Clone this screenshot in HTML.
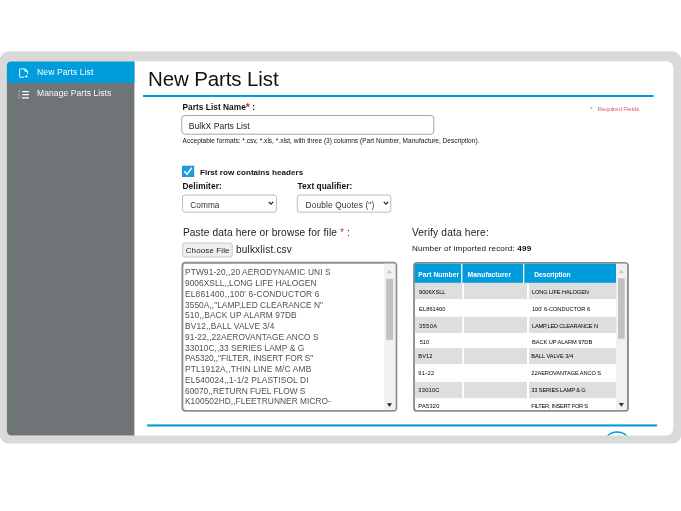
<!DOCTYPE html>
<html lang="en"><head><meta charset="utf-8"><title>New Parts List</title>
<style>
html,body{margin:0;padding:0;background:#fff;}
body{width:681px;height:511px;position:relative;overflow:hidden;font-family:"Liberation Sans",Arial,sans-serif;}
.t{position:absolute;white-space:nowrap;margin:0;padding:0;}
.ast{color:#cc1f2a;font-size:1.25em;line-height:0;vertical-align:-0.12em;letter-spacing:0;}
#txt{position:absolute;left:0;top:0;width:681px;height:511px;will-change:transform;}
svg.bg{position:absolute;left:0;top:0;}
</style></head><body>
<svg class="bg" width="681" height="511" viewBox="0 0 681 511">
<rect x="-0.2" y="51.3" width="681.40" height="392.30" rx="9" fill="#d9d9d9"/>
<defs><clipPath id="pc"><path d="M11.4 61.2H666.3a7 7 0 0 1 7 7V428.6a7 7 0 0 1-7 7H11.4a4.5 4.5 0 0 1-4.5-4.5V65.7a4.5 4.5 0 0 1 4.5-4.5z"/></clipPath></defs>
<path d="M11.4 61.2H666.3a7 7 0 0 1 7 7V428.6a7 7 0 0 1-7 7H11.4a4.5 4.5 0 0 1-4.5-4.5V65.7a4.5 4.5 0 0 1 4.5-4.5z" fill="#fff"/>
<g clip-path="url(#pc)">
<rect x="0" y="61.5" width="134.40" height="378.50" fill="#6f7477"/>
<rect x="0" y="61.5" width="134.40" height="21.40" fill="#009ddc"/>
<circle cx="617.1" cy="445.6" r="13.6" fill="none" stroke="#009ddc" stroke-width="1.4"/>
</g>
<g fill="none" stroke="#fff" stroke-width="0.95" stroke-linejoin="round" stroke-linecap="round">
<path d="M23.8 77.2H20.2a.6 .6 0 0 1-.6-.6V69.5a.6 .6 0 0 1 .6-.6H24.9L27.6 71.6V73.7"/>
<path d="M24.9 68.9V71.6H27.6z" fill="#fff" stroke-width="0.5"/>
<path d="M26.3 74.6c.2 1.2 .6 1.6 1.8 1.8c-1.2.2-1.6.6-1.8 1.8c-.2-1.2-.6-1.6-1.8-1.8c1.2-.2 1.6-.6 1.8-1.8z" fill="#fff" stroke="none"/>
</g>
<g fill="none" stroke="#fff">
<path d="M22.1 91.6h6.8M22.1 94.7h6.8M22.1 97.8h6.8" stroke-width="1.3"/>
<path d="M18.2 91.5l.7.7l1.3-1.6M18.2 94.6l.7.7l1.3-1.6M18.2 97.7l.7.7l1.3-1.6" stroke-width="0.6" stroke="#e8e9e9"/>
</g>
<rect x="143" y="95" width="510.60" height="2.00" fill="#009ddc"/>
<rect x="147" y="424.4" width="510.10" height="2.10" fill="#009ddc"/>
<rect x="181.8" y="115.5" width="252.00" height="18.70" rx="3" fill="#fff" stroke="#a6a6a6" stroke-width="1"/>
<rect x="182" y="165.7" width="12.20" height="11.30" fill="#1a9cdc"/>
<path d="M184.4 171.3l2.6 3l4.9-6.6" fill="none" stroke="#fff" stroke-width="1.5"/>
<rect x="182.5" y="195" width="94.00" height="17.20" rx="2.5" fill="#fff" stroke="#bcbcbc" stroke-width="1"/>
<path d="M268.8 201.8l2.2 2.4l2.2-2.4" fill="none" stroke="#222" stroke-width="1.25"/>
<rect x="297.3" y="195" width="93.50" height="17.20" rx="2.5" fill="#fff" stroke="#bcbcbc" stroke-width="1"/>
<path d="M383.8 201.8l2.2 2.4l2.2-2.4" fill="none" stroke="#222" stroke-width="1.25"/>
<rect x="182.6" y="243" width="49.60" height="14.00" rx="2" fill="#efefef" stroke="#c8c8c8" stroke-width="1"/>
<rect x="182.4" y="262.75" width="213.95" height="148.10" rx="3" fill="#fff" stroke="#8e8e8e" stroke-width="1.9"/>
<rect x="384.2" y="263.7" width="11.20" height="146.20" fill="#f1f1f1"/>
<rect x="386.1" y="278.8" width="7.00" height="61.10" fill="#c1c1c1"/>
<path d="M387 273.3h5l-2.5-3.6z" fill="#c4c4c4"/>
<path d="M387 403.3h5l-2.5 3.6z" fill="#2a2a2a"/>
<rect x="414.05" y="262.85" width="213.90" height="148.05" rx="3" fill="#fff" stroke="#8e8e8e" stroke-width="1.9"/>
<rect x="414.8" y="263.7" width="46.30" height="19.20" fill="#009ddc"/>
<rect x="462.4" y="263.7" width="60.60" height="19.20" fill="#009ddc"/>
<rect x="524.3" y="263.7" width="92.00" height="19.20" fill="#009ddc"/>
<rect x="414.8" y="282.9" width="47.50" height="16.10" fill="#dedede"/>
<rect x="464.0" y="282.9" width="63.00" height="16.10" fill="#dedede"/>
<rect x="529.1" y="282.9" width="87.20" height="16.10" fill="#dedede"/>
<rect x="414.8" y="316.7" width="47.50" height="16.30" fill="#dedede"/>
<rect x="464.0" y="316.7" width="63.00" height="16.30" fill="#dedede"/>
<rect x="529.1" y="316.7" width="87.20" height="16.30" fill="#dedede"/>
<rect x="414.8" y="348" width="47.50" height="16.10" fill="#dedede"/>
<rect x="464.0" y="348" width="63.00" height="16.10" fill="#dedede"/>
<rect x="529.1" y="348" width="87.20" height="16.10" fill="#dedede"/>
<rect x="414.8" y="381.9" width="47.50" height="16.30" fill="#dedede"/>
<rect x="464.0" y="381.9" width="63.00" height="16.30" fill="#dedede"/>
<rect x="529.1" y="381.9" width="87.20" height="16.30" fill="#dedede"/>
<rect x="616.1" y="263.8" width="10.90" height="146.10" fill="#f1f1f1"/>
<rect x="618" y="278.3" width="6.70" height="60.50" fill="#c1c1c1"/>
<path d="M618.9 273.3h5l-2.5-3.6z" fill="#c4c4c4"/>
<path d="M618.9 403.1h5l-2.5 3.6z" fill="#2a2a2a"/>
</svg>
<div id="txt">
<div class="t" style="left:37.09px;top:67px;font-size:8.5px;line-height:11px;letter-spacing:0.110px;color:#fff;">New Parts List</div>
<div class="t" style="left:37.09px;top:88px;font-size:8.5px;line-height:11px;letter-spacing:0.086px;color:#fafafa;">Manage Parts Lists</div>
<div class="t" style="left:147.97px;top:65px;font-size:20.5px;line-height:27px;letter-spacing:-0.115px;color:#111;">New Parts List</div>
<div class="t" style="left:182.50px;top:102px;font-size:8.3px;line-height:11px;letter-spacing:0.042px;font-weight:bold;color:#111;">Parts List Name<span class="ast">*</span> :</div>
<div class="t" style="left:188.73px;top:121px;font-size:8.6px;line-height:11px;letter-spacing:0.022px;color:#222;">BulkX Parts List</div>
<div class="t" style="left:182.61px;top:137px;font-size:6.5px;line-height:8px;letter-spacing:0.024px;color:#111;">Acceptable formats: *.csv, *.xls, *.xlst, with three (3) columns (Part Number, Manufacture, Description).</div>
<div class="t" style="left:590.23px;top:105px;font-size:6.2px;line-height:8px;color:#d0636b;">*</div>
<div class="t" style="left:597.43px;top:105px;font-size:6.2px;line-height:8px;letter-spacing:-0.098px;color:#d0636b;">Required Fields</div>
<div class="t" style="left:200.01px;top:167px;font-size:8.1px;line-height:11px;letter-spacing:0.006px;font-weight:bold;color:#111;">First row contains headers</div>
<div class="t" style="left:182.50px;top:181px;font-size:8.3px;line-height:11px;letter-spacing:0.107px;font-weight:bold;color:#111;">Delimiter:</div>
<div class="t" style="left:297.50px;top:181px;font-size:8.3px;line-height:11px;letter-spacing:0.067px;font-weight:bold;color:#111;">Text qualifier:</div>
<div class="t" style="left:190.25px;top:200px;font-size:8.3px;line-height:11px;letter-spacing:0.048px;color:#333;">Comma</div>
<div class="t" style="left:305.50px;top:200px;font-size:8.3px;line-height:11px;letter-spacing:0.162px;color:#333;">Double Quotes (")</div>
<div class="t" style="left:182.89px;top:226px;font-size:10.2px;line-height:13px;letter-spacing:0.121px;color:#222;">Paste data here or browse for file</div>
<div class="t" style="left:339.89px;top:226px;font-size:10.2px;line-height:13px;color:#e03030;">*</div>
<div class="t" style="left:346.89px;top:226px;font-size:10.2px;line-height:13px;color:#222;">:</div>
<div class="t" style="left:185.72px;top:246px;font-size:8.0px;line-height:10px;letter-spacing:0.107px;color:#222;">Choose File</div>
<div class="t" style="left:235.90px;top:243px;font-size:10.0px;line-height:13px;letter-spacing:0.217px;color:#222;">bulkxlist.csv</div>
<div class="t" style="left:185.00px;top:267px;font-size:8.35px;line-height:11px;letter-spacing:0.112px;color:#505050;">PTW91-20,,20 AERODYNAMIC UNI S</div>
<div class="t" style="left:185.00px;top:278px;font-size:8.35px;line-height:11px;letter-spacing:0.046px;color:#505050;">9006XSLL,,LONG LIFE HALOGEN</div>
<div class="t" style="left:185.00px;top:289px;font-size:8.35px;line-height:11px;letter-spacing:0.205px;color:#505050;">EL861400,,100' 6-CONDUCTOR 6</div>
<div class="t" style="left:185.00px;top:300px;font-size:8.35px;line-height:11px;letter-spacing:0.052px;color:#505050;">3550A,,"LAMP,LED CLEARANCE N"</div>
<div class="t" style="left:185.00px;top:310px;font-size:8.35px;line-height:11px;letter-spacing:0.127px;color:#505050;">510,,BACK UP ALARM 97DB</div>
<div class="t" style="left:185.00px;top:321px;font-size:8.35px;line-height:11px;letter-spacing:0.126px;color:#505050;">BV12,,BALL VALVE 3/4</div>
<div class="t" style="left:185.00px;top:332px;font-size:8.35px;line-height:11px;letter-spacing:0.085px;color:#505050;">91-22,,22AEROVANTAGE ANCO S</div>
<div class="t" style="left:185.00px;top:343px;font-size:8.35px;line-height:11px;letter-spacing:0.059px;color:#505050;">33010C,,33 SERIES LAMP &amp; G</div>
<div class="t" style="left:185.00px;top:353px;font-size:8.35px;line-height:11px;letter-spacing:-0.076px;color:#505050;">PA5320,,"FILTER, INSERT FOR S"</div>
<div class="t" style="left:185.00px;top:364px;font-size:8.35px;line-height:11px;letter-spacing:0.164px;color:#505050;">PTL1912A,,THIN LINE M/C AMB</div>
<div class="t" style="left:185.00px;top:375px;font-size:8.35px;line-height:11px;letter-spacing:0.137px;color:#505050;">EL540024,,1-1/2 PLASTISOL DI</div>
<div class="t" style="left:185.00px;top:386px;font-size:8.35px;line-height:11px;letter-spacing:0.007px;color:#505050;">60070,,RETURN FUEL FLOW S</div>
<div class="t" style="left:185.00px;top:396px;font-size:8.35px;line-height:11px;letter-spacing:0.044px;color:#505050;">K100502HD,,FLEETRUNNER MICRO-</div>
<div class="t" style="left:411.89px;top:226px;font-size:10.2px;line-height:13px;letter-spacing:0.168px;color:#222;">Verify data here:</div>
<div class="t" style="left:412.01px;top:243px;font-size:8.1px;line-height:11px;letter-spacing:0.152px;color:#111;">Number of imported record: <b>499</b></div>
<div class="t" style="left:418.30px;top:270px;font-size:6.7px;line-height:9px;letter-spacing:0.059px;font-weight:bold;color:#fff;">Part Number</div>
<div class="t" style="left:467.50px;top:270px;font-size:6.7px;line-height:9px;letter-spacing:0.106px;font-weight:bold;color:#fff;">Manufacturer</div>
<div class="t" style="left:534.30px;top:270px;font-size:6.7px;line-height:9px;letter-spacing:-0.055px;font-weight:bold;color:#fff;">Description</div>
<div class="t" style="left:419.06px;top:289px;font-size:5.7px;line-height:7px;letter-spacing:-0.020px;color:#000;">9006XSLL</div>
<div class="t" style="left:531.96px;top:289px;font-size:5.7px;line-height:7px;letter-spacing:-0.134px;color:#000;">LONG LIFE HALOGEN</div>
<div class="t" style="left:419.06px;top:306px;font-size:5.7px;line-height:7px;letter-spacing:0.070px;color:#000;">EL861400</div>
<div class="t" style="left:531.96px;top:306px;font-size:5.7px;line-height:7px;letter-spacing:-0.039px;color:#000;">100' 6-CONDUCTOR 6</div>
<div class="t" style="left:419.06px;top:323px;font-size:5.7px;line-height:7px;letter-spacing:0.375px;color:#000;">3550A</div>
<div class="t" style="left:531.96px;top:323px;font-size:5.7px;line-height:7px;letter-spacing:-0.179px;color:#000;">LAMP,LED CLEARANCE N</div>
<div class="t" style="left:419.66px;top:339px;font-size:5.7px;line-height:7px;letter-spacing:-0.013px;color:#000;">510</div>
<div class="t" style="left:531.96px;top:339px;font-size:5.7px;line-height:7px;letter-spacing:-0.076px;color:#000;">BACK UP ALARM 97DB</div>
<div class="t" style="left:418.36px;top:353px;font-size:5.7px;line-height:7px;letter-spacing:0.047px;color:#000;">BV12</div>
<div class="t" style="left:531.36px;top:353px;font-size:5.7px;line-height:7px;letter-spacing:-0.044px;color:#000;">BALL VALVE 3/4</div>
<div class="t" style="left:418.36px;top:370px;font-size:5.7px;line-height:7px;letter-spacing:0.301px;color:#000;">91-22</div>
<div class="t" style="left:531.36px;top:370px;font-size:5.7px;line-height:7px;letter-spacing:-0.117px;color:#000;">22AEROVANTAGE ANCO S</div>
<div class="t" style="left:418.36px;top:387px;font-size:5.7px;line-height:7px;letter-spacing:0.223px;color:#000;">33010C</div>
<div class="t" style="left:531.36px;top:387px;font-size:5.7px;line-height:7px;letter-spacing:-0.162px;color:#000;">33 SERIES LAMP &amp; G</div>
<div class="t" style="left:418.36px;top:403px;font-size:5.7px;line-height:7px;letter-spacing:0.245px;color:#000;">PA5320</div>
<div class="t" style="left:531.36px;top:403px;font-size:5.7px;line-height:7px;letter-spacing:-0.279px;color:#000;">FILTER, INSERT FOR S</div>
</div>
</body></html>
